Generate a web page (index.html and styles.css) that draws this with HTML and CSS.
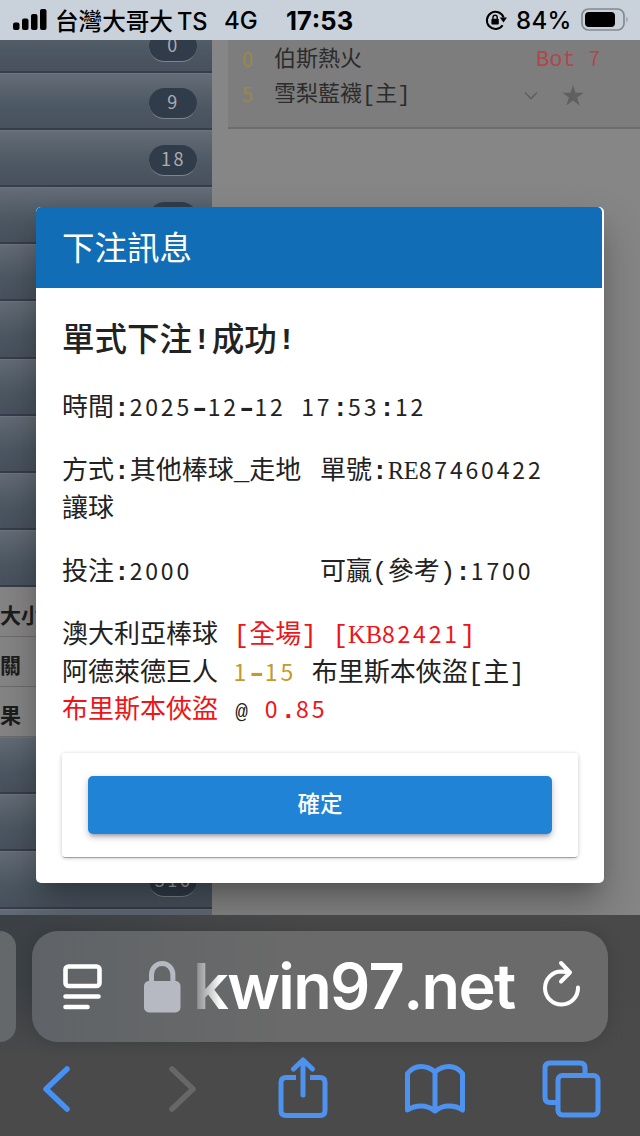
FILE: index.html
```html
<!DOCTYPE html>
<html lang="zh-Hant">
<head>
    <meta charset="UTF-8">
    <meta name="viewport" content="width=device-width, initial-scale=1.0">
    <title>下注訊息</title>
    <link rel="stylesheet" href="styles.css">
</head>
<body>
    <div class="status-bar">
        <svg class="signal" width="34" height="22" viewBox="0 0 34 22">
            <rect x="0" y="13.5" width="6.5" height="7.5" rx="2"/>
            <rect x="9" y="9.5" width="6.5" height="11.5" rx="2"/>
            <rect x="18" y="5" width="6.5" height="16" rx="2"/>
            <rect x="27" y="0" width="6.5" height="21" rx="2"/>
        </svg>
        <span class="carrier">台灣大哥大<span class="ts">TS</span></span>
        <span class="network">4G</span>
        <span class="clock">17:53</span>
        <svg class="rotation" width="22" height="22" viewBox="0 0 22 22">
            <path d="M17.6 16.2A8.600 8.600 0 1 1 18.600 8.500" fill="none" stroke="#000" stroke-width="2"/>
            <path d="M14.800 8.600h7.200l-3.500 4.800z"/>
            <rect x="6.400" y="9.800" width="7.400" height="5.700" rx="1"/>
            <path d="M8 10V8.300a2.100 2.100 0 0 1 4.200 0v2" fill="none" stroke="#000" stroke-width="1.400"/>
        </svg>
        <span class="percent">84%</span>
        <svg class="battery" width="48" height="24" viewBox="0 0 48 24">
            <rect x="1" y="1" width="42" height="21" rx="6.5" fill="none" stroke="#85898e" stroke-width="1.7"/>
            <rect x="4" y="4" width="30" height="15" rx="4"/>
            <path d="M45.5 8.5q2.2 3 0 6z" fill="#85898e"/>
        </svg>
    </div>

    <div class="page">
        <div class="sidebar">
            <div class="menu-row"><span class="pill">0</span></div>
            <div class="menu-row"><span class="pill">9</span></div>
            <div class="menu-row"><span class="pill">18</span></div>
            <div class="menu-row"><span class="pill"></span></div>
            <div class="menu-row"></div>
            <div class="menu-row"></div>
            <div class="menu-row"></div>
            <div class="menu-row"></div>
            <div class="menu-row"></div>
            <div class="menu-row"></div>
            <div class="sub-row">大小</div>
            <div class="sub-row">關</div>
            <div class="sub-row">果</div>
            <div class="menu-row"></div>
            <div class="menu-row"></div>
            <div class="menu-row"><span class="pill">316</span></div>
            <div class="menu-row"></div>
        </div>
        <div class="games">
            <div class="game">
                <div class="team">
                    <span class="score num">0</span>
                    <span class="name">伯斯熱火</span>
                    <span class="inning">Bot <span class="num">7</span></span>
                </div>
                <div class="team">
                    <span class="score num">5</span>
                    <span class="name">雪梨藍襪[主]</span>
                    <svg class="tools" width="62" height="24" viewBox="0 0 62 24">
                        <path d="M2 8.500l6 6 6-6" fill="none" stroke="#606060" stroke-width="1.600"/>
                        <path d="M50 1l2.500 7.700h8.200l-6.600 4.900 2.500 7.900-6.600-4.900-6.600 4.900 2.500-7.900-6.600-4.900h8.200z" fill="#606060"/>
                    </svg>
                </div>
            </div>
        </div>

        <div class="dialog">
            <div class="dialog-title">下注訊息</div>
            <div class="dialog-body">
                <h2>單式下注<span class="bang">!</span>成功<span class="bang">!</span></h2>
                <div class="row time">
                    <div>時間<b>:</b><span class="num">2025</span><b class="dash">-</b><span class="num">12</span><b class="dash">-</b><span class="num">12</span> <span class="num">17</span><b>:</b><span class="num">53</span><b>:</b><span class="num">12</span></div>
                </div>
                <div class="row kind">
                    <div>方式<b>:</b>其他棒球_走地讓球</div>
                    <div>單號<b>:</b><span class="slab">RE</span><span class="num">87460422</span></div>
                </div>
                <div class="row stake">
                    <div>投注<b>:</b><span class="num">2000</span></div>
                    <div>可贏<i>(</i>參考<i>)</i><b>:</b><span class="num">1700</span></div>
                </div>
                <div class="bet">
                    <div>澳大利亞棒球 <span class="red"><i>[</i>全場<i>]</i> <i>[</i><span class="slab">KB</span><span class="num">82421</span><i>]</i></span></div>
                    <div>阿德萊德巨人 <span class="gold"><span class="num">1</span><b class="dash">-</b><span class="num">15</span></span> 布里斯本俠盜<i>[</i>主<i>]</i></div>
                    <div><span class="red">布里斯本俠盜</span> <span class="at">@</span> <span class="red"><span class="num">0</span><b>.</b><span class="num">85</span></span></div>
                </div>
                <div class="actions"><button class="ok">確定</button></div>
            </div>
        </div>
    </div>

    <div class="browser">
        <div class="tabs">
            <div class="prev-tab"></div>
            <div class="address">
                <svg class="reader" width="40" height="48" viewBox="0 0 40 48" fill="none" stroke="#fff" stroke-width="4.6" stroke-linecap="round">
                    <rect x="3.500" y="3.500" width="34" height="19.5" rx="3"/>
                    <path d="M3.500 33.5h33M3.500 44h22"/>
                </svg>
                <svg class="lock" width="37" height="52" viewBox="0 0 37 52">
                    <rect x="0" y="20" width="36.5" height="31.5" rx="5" fill="#b7b9c2"/>
                    <path d="M7.5 22V13.5a10.7 11 0 0 1 21.4 0V22" fill="none" stroke="#b7b9c2" stroke-width="5"/>
                </svg>
                <span class="host">kwin97.net</span>
                <svg class="reload" width="40" height="48" viewBox="0 0 40 48" fill="none" stroke="#fff" stroke-width="4" stroke-linecap="round" stroke-linejoin="round">
                    <path d="M36 27.5A16.5 16.5 0 1 1 19.500 11.500L28 12.500M19 3l9 9.500-9 9"/>
                </svg>
            </div>
        </div>
        <div class="toolbar">
            <svg class="back" width="28" height="48" viewBox="0 0 28 48" fill="none" stroke="#4592f7" stroke-width="5.5" stroke-linecap="round" stroke-linejoin="round"><path d="M25 4L4 24l21 20"/></svg>
            <svg class="forward" width="28" height="48" viewBox="0 0 28 48" fill="none" stroke="#676767" stroke-width="5.5" stroke-linecap="round" stroke-linejoin="round"><path d="M3 4l21 20L3 44"/></svg>
            <svg class="share" width="50" height="62" viewBox="0 0 50 62" fill="none" stroke="#4d92ef" stroke-width="5" stroke-linecap="round" stroke-linejoin="round">
                <path d="M18 20.500H8q-5 0-5 5v28q0 5 5 5h34q5 0 5-5v-28q0-5-5-5H32" stroke-linecap="butt"/>
                <path d="M25 38V3.500M15.500 12L25 3l9.500 9"/>
            </svg>
            <svg class="book" width="60" height="51" viewBox="0 0 60 51" fill="none" stroke="#4d92ef" stroke-width="5" stroke-linejoin="round">
                <path d="M30 8Q24 2.500 16 2.500T2.500 9.500V46q6-4 13.500-4t14 5q6-5 14-5t13.500 4V9.500Q52 2.500 44 2.500T30 8zM30 8v39"/>
            </svg>
            <svg class="pages" width="59" height="58" viewBox="0 0 59 58" fill="none" stroke="#4d92ef" stroke-width="5">
                <rect x="16" y="15.500" width="40" height="39.500" rx="4.500"/>
                <path d="M14 42.500H8q-5 0-5-5V8q0-5 5-5h30q5 0 5 5v6"/>
            </svg>
        </div>
    </div>
</body>
</html>
```
FILE: styles.css
```css
* {
    box-sizing: border-box;
}
body {
    margin: 0;
    width: 640px;
    height: 1136px;
    overflow: hidden;
    display: flex;
    flex-direction: column;
    font-family: "Liberation Mono", "Noto Sans CJK TC", monospace;
    font-kerning: none;
}
svg {
    display: block;
    flex: none;
}
b, i {
    font-style: normal;
}

/* status bar */
.status-bar {
    height: 40px;
    flex: none;
    display: flex;
    align-items: center;
    padding-left: 13px;
    background: #c9d1da;
    color: #000;
    font-family: Inter, "Noto Sans CJK TC", sans-serif;
    font-size: 24px;
    font-weight: 500;
    white-space: nowrap;
}
.status-bar span {
    flex: none;
}
.signal {
    margin-top: -1px;
}
.carrier {
    width: 170px;
    padding-left: 8px;
    font-size: 23.6px;
}
.ts {
    padding-left: 4px;
}
.network {
    width: 68px;
    padding-left: 7px;
}
.clock {
    width: 200px;
    padding-left: 1px;
    font-weight: 700;
    font-size: 25.5px;
}
.percent {
    width: 74px;
    padding-left: 9px;
    letter-spacing: 0.3px;
}

/* page behind the dialog */
.page {
    position: relative;
    height: 875px;
    flex: none;
    display: flex;
    overflow: hidden;
    background: #868686;
}
.sidebar {
    width: 212px;
    flex: none;
    margin-top: -24px;
}
.menu-row {
    height: 57.1px;
    padding: 14px 15px 0 0;
    display: flex;
    justify-content: flex-end;
    background: linear-gradient(#646c77, #4c5863 60%, #48515d);
    border-top: 1px solid #6c747e;
    border-bottom: 2px solid #363e4b;
}
.pill {
    width: 48px;
    height: 31px;
    border-radius: 16px;
    background: #313c4a;
    border-bottom: 1px solid #7d848b;
    color: #a9adb1;
    font-family: "Noto Sans CJK TC", sans-serif;
    font-size: 18px;
    line-height: 27px;
    letter-spacing: 2.5px;
    text-indent: 1px;
    text-align: center;
}
.sub-row {
    height: 50.1px;
    line-height: 62px;
    font-size: 21px;
    font-weight: 700;
    color: #1c1c1c;
    background: #858585;
    border-bottom: 1px solid #6c6c6c;
    overflow: hidden;
}
.games {
    flex: 1;
    padding-left: 16px;
}
.game {
    height: 89px;
    padding-top: 1px;
    background: #7d7d7d;
    border-bottom: 2px solid #6d6d6d;
    font-size: 22px;
}
.team {
    height: 35px;
    line-height: 40px;
    display: flex;
    color: #2c2c2c;
}
.team .score {
    width: 46px;
    padding-left: 14px;
    line-height: 36px;
    color: #9c8748;
}
.team .name {
    width: 247px;
}
.team .num {
    font-size: 20px;
}
.inning {
    margin-left: 15px;
    color: #b0474c;
}
.tools {
    margin: 8px 0 0 2px;
}

/* dialog */
.dialog {
    position: absolute;
    left: 36px;
    top: 167px;
    width: 567.5px;
    height: 676px;
    border-radius: 5px;
    overflow: hidden;
    background: #fff;
    color: #222;
    box-shadow: 0 14px 20px -9px rgba(0, 0, 0, 0.25), 0 24px 44px 3px rgba(0, 0, 0, 0.22);
}
.dialog-title {
    height: 81px;
    margin-right: 1.5px;
    padding-left: 26px;
    border-radius: 5px 5px 0 0;
    background: #126db7;
    color: #fff;
    font-size: 32.5px;
    line-height: 90px;
}
.dialog-body {
    padding: 29px 26px 0;
    font-size: 26px;
    line-height: 37.5px;
}
h2 {
    margin: 0;
    height: 74px;
    font-size: 32.5px;
    line-height: 52px;
    font-weight: 500;
}
.bang {
    font-size: 30px;
    font-weight: 700;
    line-height: 1;
    padding: 0 0.8px;
    vertical-align: 2px;
}
.row {
    display: grid;
    grid-template-columns: 258px 1fr;
}
.row > div:first-child {
    padding-right: 12px;
}
.time {
    grid-template-columns: 1fr;
    height: 63px;
}
.kind {
    height: 101px;
}
.stake {
    height: 63px;
}
.num {
    font-family: "Noto Sans CJK TC", sans-serif;
    font-size: 23px;
    letter-spacing: 2.83px;
    line-height: 1;
}
.slab {
    font-family: "Liberation Serif", serif;
    font-size: 24.5px;
    letter-spacing: -0.1px;
    line-height: 1;
}
.dash {
    display: inline-block;
    line-height: 1;
    transform: scaleX(1.45);
}
.at {
    font-size: 21px;
    letter-spacing: 1.5px;
    padding-left: 1.5px;
    line-height: 1;
}
.red {
    color: #ee1418;
}
.gold {
    color: #c49a2a;
}
.bet {
    height: 135px;
    white-space: nowrap;
}
.bet > div {
    height: 37.5px;
}
.actions {
    height: 104px;
    width: 516px;
    padding: 23px 26px;
    border-radius: 3px;
    box-shadow: 0 2px 1px -1px rgba(0, 0, 0, 0.3), 0 1px 4px rgba(0, 0, 0, 0.22);
}
.ok {
    display: block;
    width: 464px;
    height: 58px;
    padding: 0 0 6px;
    border: 0;
    border-radius: 5px;
    background: #2083d5;
    color: #fff;
    font-family: "Noto Sans CJK TC", sans-serif;
    font-size: 22.5px;
    font-weight: 500;
    box-shadow: 0 4px 3px -2px rgba(60, 60, 120, 0.25), 0 3px 7px rgba(0, 0, 0, 0.25);
}

/* browser chrome */
.browser {
    height: 221px;
    flex: none;
    background: linear-gradient(rgba(74, 74, 74, 0) 30%, #4a4a4a 65%), linear-gradient(90deg, #3b4045, #494949 50%);
}
.tabs {
    display: flex;
    gap: 16px;
    padding-top: 16px;
}
.prev-tab {
    width: 16px;
    height: 111px;
    border-radius: 0 24px 24px 0;
    background: #65686b;
}
.address {
    width: 576px;
    height: 111px;
    display: flex;
    align-items: center;
    padding-left: 30px;
    border-radius: 26px;
    background: linear-gradient(90deg, #5f6367, #6a6a6a 45%);
    box-shadow: 0 0 16px rgba(0, 0, 0, 0.14);
}
.lock {
    margin: 0 12px 0 42px;
}
.host {
    width: 349px;
    color: #fff;
    font-family: Inter, sans-serif;
    font-size: 63px;
    font-weight: 600;
    letter-spacing: -1.7px;
    line-height: 111px;
    -webkit-mask-image: linear-gradient(90deg, rgba(0, 0, 0, 0.15), #000 28px);
    mask-image: linear-gradient(90deg, rgba(0, 0, 0, 0.15), #000 28px);
}
.reload {
    margin-top: -6px;
}
.toolbar {
    height: 94px;
    display: flex;
    align-items: center;
    padding-left: 42px;
}
.forward {
    margin-left: 99px;
}
.share {
    margin: -3px 0 0 81px;
}
.book {
    margin-left: 77px;
}
.pages {
    margin-left: 77px;
}
```
